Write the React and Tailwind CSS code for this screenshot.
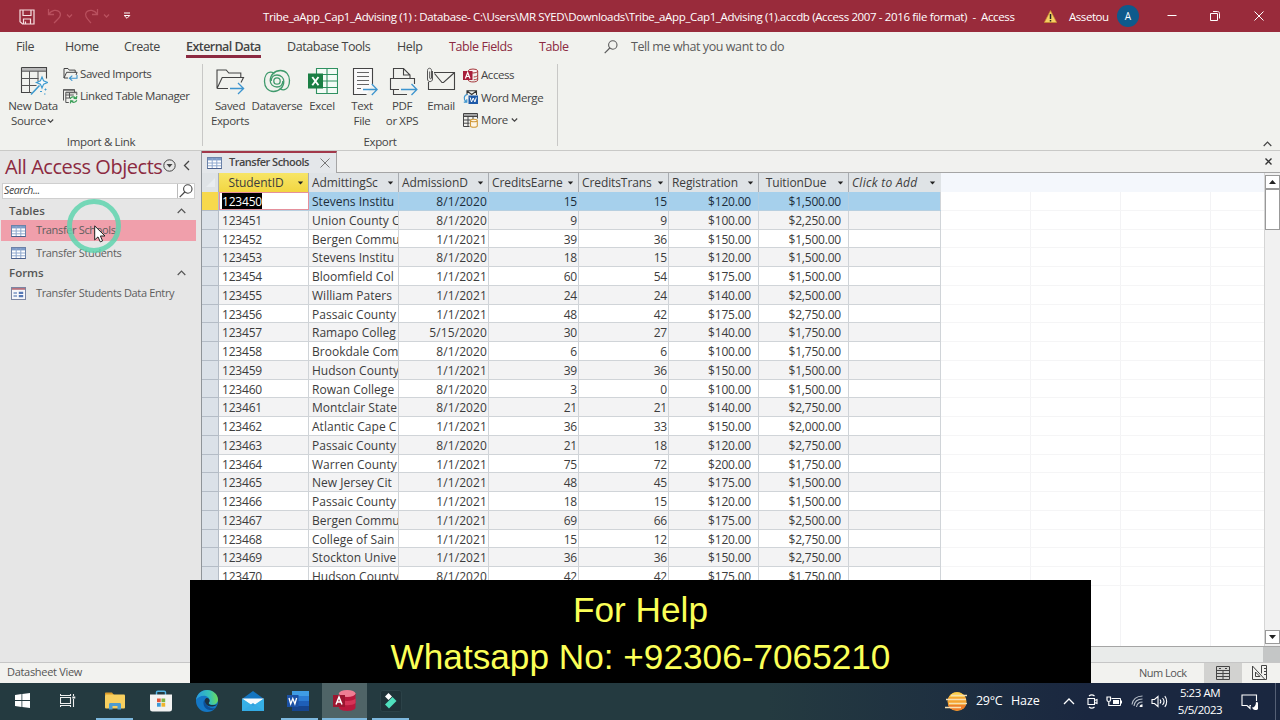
import clsx from 'clsx';

const rows = [
  ['123450', 'Stevens Institu', '8/1/2020', '15', '15', '$120.00', '$1,500.00'],
  ['123451', 'Union County C', '8/1/2020', '9', '9', '$100.00', '$2,250.00'],
  ['123452', 'Bergen Commu', '1/1/2021', '39', '36', '$150.00', '$1,500.00'],
  ['123453', 'Stevens Institu', '8/1/2020', '18', '15', '$120.00', '$1,500.00'],
  ['123454', 'Bloomfield Col', '1/1/2021', '60', '54', '$175.00', '$1,500.00'],
  ['123455', 'William Paters', '1/1/2021', '24', '24', '$140.00', '$2,500.00'],
  ['123456', 'Passaic County', '1/1/2021', '48', '42', '$175.00', '$2,750.00'],
  ['123457', 'Ramapo Colleg', '5/15/2020', '30', '27', '$140.00', '$1,750.00'],
  ['123458', 'Brookdale Com', '8/1/2020', '6', '6', '$100.00', '$1,750.00'],
  ['123459', 'Hudson County', '1/1/2021', '39', '36', '$150.00', '$1,500.00'],
  ['123460', 'Rowan College', '8/1/2020', '3', '0', '$100.00', '$1,500.00'],
  ['123461', 'Montclair State', '8/1/2020', '21', '21', '$140.00', '$2,750.00'],
  ['123462', 'Atlantic Cape C', '1/1/2021', '36', '33', '$150.00', '$2,000.00'],
  ['123463', 'Passaic County', '8/1/2020', '21', '18', '$120.00', '$2,750.00'],
  ['123464', 'Warren County', '1/1/2021', '75', '72', '$200.00', '$1,750.00'],
  ['123465', 'New Jersey Cit', '1/1/2021', '48', '45', '$175.00', '$1,500.00'],
  ['123466', 'Passaic County', '1/1/2021', '18', '15', '$120.00', '$1,500.00'],
  ['123467', 'Bergen Commu', '1/1/2021', '69', '66', '$175.00', '$2,500.00'],
  ['123468', 'College of Sain', '1/1/2021', '15', '12', '$120.00', '$2,750.00'],
  ['123469', 'Stockton Unive', '1/1/2021', '36', '36', '$150.00', '$2,750.00'],
  ['123470', 'Hudson County', '8/1/2020', '42', '42', '$175.00', '$1,750.00'],
];

const columns = ['StudentID', 'AdmittingSc', 'AdmissionD', 'CreditsEarne', 'CreditsTrans', 'Registration', 'TuitionDue'];

const tabs = [
  { label: 'File', width: 'w-[49px]' },
  { label: 'Home', width: 'w-[59px]' },
  { label: 'Create', width: 'w-[62px]' },
  { label: 'External Data', width: 'w-[101px]', active: true },
  { label: 'Database Tools', width: 'w-[110px]' },
  { label: 'Help', width: 'w-[52px]' },
  { label: 'Table Fields', width: 'w-[90px]', context: true },
  { label: 'Table', width: 'w-[65px]', context: true },
];

function Svg({ w, h, children, className }) {
  return (
    <svg width={w} height={h} viewBox={`0 0 ${w} ${h}`} fill="none" className={clsx('shrink-0', className)}>
      {children}
    </svg>
  );
}

function Chevron({ up, className }) {
  return (
    <Svg w={9} h={6} className={className}>
      <path d={up ? 'M.7 5 4.5 1.2 8.3 5' : 'M1.8 1.5 4.5 4.2 7.2 1.5'} stroke="currentColor" strokeWidth="1.2" />
    </Svg>
  );
}

function Magnifier() {
  return (
    <Svg w={14} h={14}>
      <circle cx="8.8" cy="5" r="4.2" stroke="currentColor" strokeWidth="1.1" />
      <path d="M5.8 8 .7 13.2" stroke="currentColor" strokeWidth="1.2" />
    </Svg>
  );
}

function TableIcon() {
  return (
    <Svg w={15} h={12}>
      <rect x=".5" y=".5" width="14" height="11" fill="#fff" stroke="#6b82a8" />
      <path d="M1 1h13v2.4H1z" fill="#7d9cc8" />
      <path d="M1 6h13M1 8.8h13M5.2 1v10M9.8 1v10" stroke="#8fa8ce" />
      <path d="M.5 11.5h14" stroke="#4a608c" />
    </Svg>
  );
}

function FormIcon() {
  return (
    <Svg w={15} h={13}>
      <rect x=".5" y=".5" width="14" height="12" fill="#f7f7fb" stroke="#7b86a3" />
      <path d="M1 1h13v1.8H1z" fill="#b8727e" />
      <path d="M2.5 6h3.5M2.5 9h3.5" stroke="#3f66a8" strokeWidth="1.1" />
      <path d="M7.8 4.8h4.4v2.2H7.8zM7.8 8h4.4v2.2H7.8z" fill="#5577b5" />
    </Svg>
  );
}

function NewDataIcon() {
  return (
    <Svg w={28} h={30} className="ml-0.5">
      <path d="M1.5 1.5h25v11M1.5 1.5v25h10" stroke="#444" strokeWidth="1.1" />
      <path d="M2 2h24v3.2H2z" fill="#b9b9b9" />
      <path d="M1.5 5.2h25M1.5 12.5h17M1.5 19.5h15M9.5 5.2v21.3M18 5.2v10" stroke="#555" />
      <path d="m11 28.5 8.5-9" stroke="#3d9bd0" strokeWidth="1.6" />
      <path d="m22 11 1.600 3.900 3.900 1.600-3.900 1.600-1.600 3.900-1.600-3.900-3.900-1.600 3.900-1.600z" fill="#f4fafd" stroke="#3d9bd0" strokeWidth="1.200" />
      <path d="M25.500 22.500v2M24.500 23.500h2M20 25.500h2M24 28h1.500" stroke="#3d9bd0" />
    </Svg>
  );
}

function SavedImportsIcon() {
  return (
    <Svg w={15} h={14}>
      <path d="M1 11V1.500h4l1.200 1.600h6v2.200M1 11l2.600-5.700h10.500L13 8M1 11h4" stroke="#444" />
      <path d="M14 8v3.300H6.500M9.300 8.600 6.400 11.300l2.900 2.400" stroke="#3d95cf" strokeWidth="1.1" />
    </Svg>
  );
}

function LinkedTableIcon() {
  return (
    <Svg w={15} h={15}>
      <path d="M.5 11.500V.500h11v2.500M2.800 13.500V3.200h11V6M2.800 6h8M2.800 9h4M2.800 13.500h3M6.500 3v6" stroke="#555" />
      <path d="M.500 1h11M3 3.700h10.500" stroke="#666" strokeWidth="1.300" />
      <path d="M7.200 10c.6-2.200 3.800-3 5.400-.9M13.800 6.800l-.4 2.800-2.800-.2M13.800 11.300c-.8 2.200-4 2.800-5.400.8M7.400 14.400l.4-2.700 2.600.3" stroke="#3a9f57" strokeWidth="1.200" />
    </Svg>
  );
}

function SavedExportsIcon() {
  return (
    <Svg w={30} h={27}>
      <path d="M2 20.500V2h9.200l2.600 3h12v4.500M2 20.500l5.200-11h21.300l-2.500 5M2 20.500h11" stroke="#444" strokeWidth="1.100" />
      <path d="M15 20.500h13.500M23 15l5.600 5.500L23 26" stroke="#3d95cf" strokeWidth="1.300" />
    </Svg>
  );
}

function DataverseIcon() {
  return (
    <Svg w={28} h={24}>
      <g stroke="#3f9a6c" strokeWidth="1.300">
        <path d="M19.800 12c0 3.800-2.700 6-5.800 6-4 0-6.800-2.900-6.800-6.500C7.200 6 11.500 1.500 17.500 1.500c5.500 0 9 4.300 9 10 0 5-2 9.300-6.300 9.300-2 0-3-.8-3-2" />
        <path d="M8.200 12c0-3.800 2.700-6 5.800-6 4 0 6.800 2.900 6.800 6.500 0 5.500-4.300 10-10.300 10-5.500 0-9-4.300-9-10 0-5 2-9.300 6.300-9.300 2 0 3 .8 3 2" />
        <circle cx="14" cy="12" r="3.200" />
      </g>
    </Svg>
  );
}

function ExcelIcon() {
  return (
    <Svg w={30} h={28} className="ml-0.5">
      <path d="M8.500 1.500h21v25h-21zM8.500 7.500h21M8.500 14h21M8.500 20.500h21M19 1.500v25" stroke="#2f9160" strokeWidth="1.100" fill="#f4fbf6" />
      <rect y="6.500" width="15" height="15" fill="#1b7f44" />
      <path d="m4.300 10 6.200 8.300M10.500 10l-6.200 8.300" stroke="#fff" strokeWidth="1.900" />
    </Svg>
  );
}

function TextFileIcon() {
  return (
    <Svg w={26} h={29} className="ml-[5px]">
      <path d="M20.500 17V1.500h-19v26h13" stroke="#444" strokeWidth="1.100" fill="#fafafa" />
      <path d="M5 5.500h12M5 9.500h12M5 13.500h12M5 17.500h12M5 21.500h4" stroke="#666" />
      <path d="M11 22.500h14M19.800 17l5.400 5.500-5.400 5.500" stroke="#3d95cf" strokeWidth="1.300" />
    </Svg>
  );
}

function PdfIcon() {
  return (
    <Svg w={29} h={29} className="ml-[2px]">
      <path d="M4.500 11.500v-10h10l6.500 6.500v3.500M14.500 1.500v6.500h6.500" stroke="#444" strokeWidth="1.100" />
      <path d="M4.500 22.500h-3v-11h24v5.500M10 22.500H4.500v5h13.500" stroke="#444" strokeWidth="1.100" />
      <path d="M12 22.500h16M22.500 17l5.400 5.500-5.400 5.500" stroke="#3d95cf" strokeWidth="1.300" />
    </Svg>
  );
}

function EmailIcon() {
  return (
    <Svg w={30} h={28}>
      <path d="M8 5.500h20.500v17h-26V15" stroke="#444" strokeWidth="1.100" />
      <path d="m8.500 6.500 7.500 9h1.500L28 6" stroke="#444" strokeWidth="1.100" />
      <path d="M6.500 4v8c0 3.500-5 3.500-5 0V3.500c0-3 4-3 4 0V11c0 1-1.800 1-1.800 0V4.500" stroke="#555" />
    </Svg>
  );
}

function AccessSmallIcon() {
  return (
    <Svg w={16} h={15}>
      <ellipse cx="10" cy="3" rx="4.700" ry="2" fill="#fbeef0" stroke="#a4373a" />
      <path d="M14.700 3v9c0 2.600-9.400 2.600-9.400 0M14.700 7c0 1-1.500 1.800-4 2M14.700 10c0 1-1.500 1.600-4 1.800" stroke="#a4373a" />
      <path d="M0 3h9.500v9H0z" fill="#a81f3b" />
      <path d="m2.400 10.500 2.300-6 2.300 6M3.200 8.500h3" stroke="#fff" strokeWidth="1.200" />
    </Svg>
  );
}

function WordMergeIcon() {
  return (
    <Svg w={16} h={15}>
      <path d="M4 5V.700h9.500V5M4 1l4.700 3.500L13.500 1" stroke="#333" strokeWidth="1.100" />
      <path d="M5.500 5.500h9.500v8.500H5.500z" fill="#1e5aa8" />
      <path d="m7.200 7.500 1.300 4.500 1.700-4 1.700 4 1.400-4.500" stroke="#fff" />
      <path d="M4.500 4.500C.8 5 .2 9.500 3 11.500M.8 12.200h3V9.300" stroke="#3d95cf" strokeWidth="1.200" />
    </Svg>
  );
}

function MoreIcon() {
  return (
    <Svg w={16} h={15}>
      <path d="M.500.500h14v5M.500.500v13h6M.500 3.500h14M.500 7h7M.500 10.200h6M5 3.500v10M10 3.500V6" stroke="#444" />
      <path d="M1 1.200h13v1.800H1z" fill="#999" />
      <path d="M7.500 7.500v5.500c0 1.700 6.800 1.700 6.800 0V7.500c0-1.700-6.800-1.700-6.800 0zc0 1.600 6.800 1.600 6.800 0" stroke="#d19a3b" strokeWidth="1.100" fill="#fdf5e6" />
    </Svg>
  );
}

function BigButton({ icon, lines, width, arrow }) {
  return (
    <div className={clsx('flex flex-col items-center', width)}>
      <div className="flex h-[34px] items-center">{icon}</div>
      <div className="text-center text-[11.5px] leading-[15px] tracking-[-0.35px] whitespace-nowrap">
        {lines.map((line, i) => (
          <div key={line} className="flex items-center justify-center">
            {line}
            {arrow && i === lines.length - 1 && <Chevron />}
          </div>
        ))}
      </div>
    </div>
  );
}

function SmallButton({ icon, label, arrow }) {
  return (
    <div className="flex h-[22px] items-center gap-[2px] text-[11.5px] tracking-[-0.43px] whitespace-nowrap">
      {icon}
      <span>{label}</span>
      {arrow && <Chevron />}
    </div>
  );
}

function TitleBar() {
  return (
    <header className="flex h-8 items-center bg-[#992b3b] text-white">
      <div className="flex w-[263px] items-center pl-[19px]">
        <Svg w={16} h={16} className="mt-px">
          <path d="M1 1h14v14H3.500L1 12.700zM4 1v5.500h8V1M4.500 15v-5h7v5M6.500 12.500V15" stroke="#f7dfe2" strokeWidth="1.200" />
        </Svg>
        <Svg w={27} h={16} className="ml-3 text-[#b9505e]">
          <path d="M1.500 1v5.500H7M1.800 6.200C4.500 2 10 1 12.600 4.200c2.500 3.300-.5 6-5.600 10.800" stroke="currentColor" strokeWidth="1.300" />
          <path d="m20 6.500 2.500 2.500L25 6.500" stroke="currentColor" strokeWidth="1.300" />
        </Svg>
        <Svg w={27} h={16} className="ml-2.5 text-[#b9505e]">
          <path d="M13.500 1v5.500H8M13.200 6.200C10.500 2 5 1 2.400 4.200-.1 7.500 3 10.500 7 15" stroke="currentColor" strokeWidth="1.300" />
          <path d="m20 6.500 2.500 2.500L25 6.500" stroke="currentColor" strokeWidth="1.300" />
        </Svg>
        <Svg w={8} h={8} className="ml-3">
          <path d="M1 1h6M1.200 3.500h5.600L4 6.300z" stroke="#fff" />
        </Svg>
      </div>
      <div className="w-[781px] pt-px text-[11.5px] tracking-[-0.36px] whitespace-pre">
        {'Tribe_aApp_Cap1_Advising (1) : Database- C:\\Users\\MR SYED\\Downloads\\Tribe_aApp_Cap1_Advising (1).accdb (Access 2007 - 2016 file format)  -  Access'}
      </div>
      <Svg w={13} h={13}>
        <path d="M6.500.500 12.700 12.500H.300z" fill="#f5cf63" stroke="#c98b2e" strokeWidth=".7" />
        <path d="M6.500 4v5M6.500 10v1.500" stroke="#222" strokeWidth="1.500" />
      </Svg>
      <div className="ml-3 w-[48px] pt-px text-[11.5px] tracking-[-0.450px]">Assetou</div>
      <div className="flex size-[22px] items-center justify-center rounded-full bg-[#0e5a8c] text-[10px]">A</div>
      <Svg w={10} h={10} className="ml-[28px]">
        <path d="M.500 4.500h9" stroke="#fff" />
      </Svg>
      <Svg w={10} h={10} className="ml-[33px]">
        <path d="M.500 2.500h7v7h-7zM3 .500h4.500c1.200 0 2 .8 2 2V7.500" stroke="#fff" />
      </Svg>
      <Svg w={10} h={10} className="ml-[34px]">
        <path d="m.500.500 9 9M9.500.500l-9 9" stroke="#fff" />
      </Svg>
    </header>
  );
}

function RibbonTabs() {
  return (
    <nav className="flex h-7 items-start pl-4 text-[12.5px] tracking-[-0.42px] whitespace-nowrap">
      {tabs.map((tab) => (
        <div key={tab.label} className={clsx('shrink-0', tab.width, tab.context && 'text-[#8c2a41]')}>
          <span
            className={clsx(
              'inline-block h-[26px] pt-[6px] leading-[18px]',
              tab.active && 'border-b-[3px] border-[#8c2a41] font-semibold tracking-[-0.55px]'
            )}
          >
            {tab.label}
          </span>
        </div>
      ))}
      <div className="flex items-center gap-[13px] pt-[6px] leading-[18px] text-[#5b5b5b]">
        <Magnifier />
        <span>Tell me what you want to do</span>
      </div>
    </nav>
  );
}

function Ribbon() {
  return (
    <section className="flex h-[91px] border-b border-[#c9c9c7] pt-1 text-[#444]">
      <div className="flex h-[86px] w-[202px] flex-col">
        <div className="flex h-[70px] pl-1">
          <BigButton icon={<NewDataIcon />} lines={['New Data', 'Source']} width="w-[58px]" arrow />
          <div className="-mt-px pl-px">
            <SmallButton icon={<SavedImportsIcon />} label="Saved Imports" />
            <SmallButton icon={<LinkedTableIcon />} label="Linked Table Manager" />
          </div>
        </div>
        <div className="pt-px text-center text-[11.5px] leading-[17px] tracking-[-0.35px]">Import &amp; Link</div>
      </div>
      <div className="h-[82px] w-px bg-[#c8c8c6]" />
      <div className="flex h-[86px] w-[354px] flex-col">
        <div className="flex h-[70px] pl-1">
          <BigButton icon={<SavedExportsIcon />} lines={['Saved', 'Exports']} width="w-[46px]" />
          <BigButton icon={<DataverseIcon />} lines={['Dataverse']} width="w-[48px]" />
          <BigButton icon={<ExcelIcon />} lines={['Excel']} width="w-[42px]" />
          <BigButton icon={<TextFileIcon />} lines={['Text', 'File']} width="w-[38px]" />
          <BigButton icon={<PdfIcon />} lines={['PDF', 'or XPS']} width="w-[42px]" />
          <BigButton icon={<EmailIcon />} lines={['Email']} width="w-[36px]" />
          <div className="flex flex-col gap-[0.5px] pl-[4px]">
            <SmallButton icon={<AccessSmallIcon />} label="Access" />
            <SmallButton icon={<WordMergeIcon />} label="Word Merge" />
            <SmallButton icon={<MoreIcon />} label="More" arrow />
          </div>
        </div>
        <div className="pt-px text-center text-[11.5px] leading-[17px] tracking-[-0.35px]">Export</div>
      </div>
      <div className="h-[82px] w-px bg-[#c8c8c6]" />
      <div className="flex flex-1 items-end justify-end pr-2 pb-[3px]">
        <Chevron up />
      </div>
    </section>
  );
}

function NavGroup({ label }) {
  return (
    <div className="flex h-[19px] items-center justify-between pr-[15px] pl-[9px] text-[11.5px] font-semibold text-[#555]">
      {label}
      <Chevron up />
    </div>
  );
}

function NavItem({ icon, label, selected }) {
  return (
    <div
      className={clsx(
        'ml-px flex h-[21px] w-[195px] items-center gap-[10px] pl-[10px] text-[11px] tracking-[-0.35px] whitespace-nowrap text-[#5e5e5e]',
        selected && 'bg-[#f09fab]'
      )}
    >
      {icon}
      {label}
    </div>
  );
}

function NavPane() {
  return (
    <aside className="flex w-[201px] shrink-0 flex-col bg-[#e6e6e6]">
      <div className="flex h-[32px] items-center pl-[5px] text-[#8c2a41]">
        <span className="w-[158px] text-[20px] tracking-[-0.45px] whitespace-nowrap">All Access Objects</span>
        <Svg w={13} h={13} className="-mt-1 text-[#444]">
          <circle cx="6.500" cy="6.500" r="5.700" stroke="currentColor" />
          <path d="M3.500 5h6l-3 3.500z" fill="currentColor" />
        </Svg>
        <Svg w={7} h={11} className="-mt-1 ml-[7px] text-[#444]">
          <path d="M6 1 1.500 5.500 6 10" stroke="currentColor" strokeWidth="1.300" />
        </Svg>
      </div>
      <div className="ml-0.5 flex h-[16px] w-[193px] border border-[#cfcfcf] bg-white">
        <div className="flex flex-1 items-center border-r border-[#bbb] pl-px text-[10.500px] tracking-[-0.400px] text-[#444] italic">Search...</div>
        <div className="flex w-[16px] items-center justify-center text-[#444]">
          <Magnifier />
        </div>
      </div>
      <div className="pt-[2px]">
        <NavGroup label="Tables" />
        <NavItem icon={<TableIcon />} label="Transfer Schools" selected />
        <div className="h-[1.5px]" />
        <NavItem icon={<TableIcon />} label="Transfer Students" />
        <NavGroup label="Forms" />
        <NavItem icon={<FormIcon />} label="Transfer Students Data Entry" />
      </div>
    </aside>
  );
}

function HeaderCell({ label, selected, centered }) {
  return (
    <div
      className={clsx(
        'flex h-full w-[90px] shrink-0 items-center border-r border-[#a9adb2] pr-[4px] pl-[3px]',
        selected && 'bg-gradient-to-b from-[#f7e566] to-[#f2d640]'
      )}
    >
      <span className={clsx('flex-1 whitespace-nowrap', centered && 'pr-[7px] text-center')}>{label}</span>
      <Svg w={7} h={4} className="mt-px text-[#222]">
        <path d="M.800.500h5.400L3.500 3.500z" fill="currentColor" />
      </Svg>
    </div>
  );
}

function DataRow({ row, index }) {
  const current = index === 0;
  const cell = clsx('h-full w-[90px] shrink-0 overflow-hidden border-r whitespace-nowrap', current ? 'border-[#b7cfe0]' : 'border-[#d0d4d8]');
  return (
    <div className="flex h-[18.75px] shrink-0 leading-[20px]">
      <div className={clsx('w-[17px] shrink-0 border-r border-b border-[#b4bcc6]', current ? 'bg-[#f7d94c]' : 'bg-[#dbe1e8]')} />
      <div
        className={clsx(
          'flex w-[722px] border-b',
          current ? 'border-[#b7cfe0] bg-[#a6d0ec] text-[#1d2d3a]' : 'border-[#d0d4d8]',
          !current && (index % 2 ? 'bg-[#f3f3f4]' : 'bg-white')
        )}
      >
        <div className={clsx(cell, current ? 'border border-[#e5909c] bg-white pl-[2px] leading-[17px]' : 'pl-[3px]')}>
          {current ? <span className="inline-block h-[17px] bg-black text-white">{row[0]}</span> : row[0]}
        </div>
        <div className={clsx(cell, 'pl-[3px] tracking-[0.02px]')}>{row[1]}</div>
        {row.slice(2).map((value, i) => (
          <div key={i} className={clsx(cell, 'text-right', i === 0 && 'tracking-[0.1px]', i > 2 ? 'pr-[7px]' : 'pr-px')}>
            {value}
          </div>
        ))}
        <div className="flex-1 border-r border-[#d0d4d8]" />
      </div>
      <div className="flex flex-1 border-b border-[#f5f5f6]">
        {[0, 1, 2].map((i) => (
          <div key={i} className="w-[90px] border-r border-[#f3f3f5]" />
        ))}
      </div>
    </div>
  );
}

function Datasheet() {
  return (
    <main className="flex min-w-0 flex-1 flex-col border-l border-[#8f9499] bg-[#f1f1ef]">
      <div className="flex h-[22px] border-b border-[#a5a5a5]">
        <div className="flex h-[22px] w-[135px] items-center border-t-2 border-r border-[#a2384a] border-r-[#a5a5a5] bg-[#e4e7ea] pb-px pl-[5px]">
          <TableIcon />
          <span className="ml-[7px] w-[91px] text-[11px] font-semibold tracking-[-0.5px] whitespace-nowrap text-[#444]">Transfer Schools</span>
          <Svg w={10} h={10} className="text-[#777]">
            <path d="m.500.500 9 9M9.500.500l-9 9" stroke="currentColor" />
          </Svg>
        </div>
        <div className="flex flex-1 items-center justify-end pr-[8px] text-[#333]">
          <Svg w={7} h={7}>
            <path d="m.500.500 6 6M6.500.500l-6 6" stroke="currentColor" strokeWidth="1.400" />
          </Svg>
        </div>
      </div>
      <div className="flex min-h-0 flex-1">
        <div className="flex min-w-0 flex-1 flex-col overflow-hidden bg-white text-[12px] tracking-[-0.2px] text-[#3c3c3c]">
          <div className="flex h-[19px] shrink-0 tracking-[-0.1px] bg-[#f4f7fc]">
            <div className="flex w-[17px] items-center justify-end border-r border-[#a9adb2] bg-[#dfe3e6] pr-[3px]">
              <Svg w={9} h={9}>
                <path d="M9 0v9H0z" fill="#e9edf0" />
              </Svg>
            </div>
            <div className="flex w-[722px] bg-[#dfe3e6]">
              {columns.map((label) => (
                <HeaderCell key={label} label={label} selected={label === 'StudentID'} centered={label === 'StudentID' || label === 'TuitionDue'} />
              ))}
              <div className="flex flex-1 items-center justify-between pr-[5px] pl-[3px] tracking-[0.3px] italic">
                Click to Add
                <Svg w={7} h={4} className="text-[#222]">
                  <path d="M.800.500h5.400L3.500 3.500z" fill="currentColor" />
                </Svg>
              </div>
            </div>
          </div>
          {rows.map((row, i) => (
            <DataRow key={row[0]} row={row} index={i} />
          ))}
          <div className="flex flex-1 pl-[739px]">
            {[0, 1, 2].map((i) => (
              <div key={i} className="w-[90px] border-r border-[#f3f3f5]" />
            ))}
          </div>
        </div>
        <div className="flex w-[16px] shrink-0 flex-col border-l border-[#d5d5d5] bg-[#f1f1f1]">
          <div className="mt-[2px] flex h-[14px] items-center justify-center border border-[#999] bg-white">
            <Svg w={7} h={4}>
              <path d="M0 4h7L3.500 0z" fill="#222" />
            </Svg>
          </div>
          <div className="h-[41px] border border-[#999] bg-white" />
          <div className="flex-1" />
          <div className="flex h-[14px] items-center justify-center border border-[#999] bg-white">
            <Svg w={7} h={4}>
              <path d="M0 0h7L3.500 4z" fill="#222" />
            </Svg>
          </div>
          <div className="h-[2px]" />
        </div>
      </div>
      <div className="flex h-4 border-t border-[#a5a5a5] bg-[#e9ebea]">
        <div className="flex-1" />
        <div className="w-[17px] bg-[#c4c6c6]" />
      </div>
    </main>
  );
}

function StatusBar() {
  return (
    <footer className="flex h-[21px] items-center border-t border-[#c6c6c6] bg-[#f2f2ef] pl-[7px] text-[11px] tracking-[-0.3px] text-[#555]">
      <span className="flex-1 pb-px">Datasheet View</span>
      <span className="w-[65px] tracking-[-0.5px]">Num Lock</span>
      <div className="flex h-full w-[38px] items-center justify-center bg-[#d2d2d0] pb-px">
        <Svg w={14} h={14}>
          <path d="M.500.500h13v13H.500zM.500 4.500h13M.500 7.500h13M.500 10.500h13M7 4.500v9" stroke="#444" />
          <path d="M3 2.500h2M9 2.500h2" stroke="#444" />
        </Svg>
      </div>
      <div className="flex w-[38px] items-center justify-center pr-1 pb-px">
        <Svg w={15} h={15}>
          <path d="M.500 1v13.500h12.500zM3.500 7v4.500H8zM9.500 8.500V.500h5v14h-2M12 3.500h2.500M12 6.500h2.500M12 9.500h2.500" stroke="#444" />
        </Svg>
      </div>
    </footer>
  );
}

function TaskItem({ children, width, underline, active }) {
  return (
    <div className={clsx('flex h-full shrink-0 flex-col items-center', width, active && 'bg-[#4f6467]')}>
      <div className="flex flex-1 items-center">{children}</div>
      <div className={clsx('h-[2px]', active ? 'w-full' : 'w-[37px]', underline && 'bg-[#7db8de]')} />
    </div>
  );
}

function Taskbar() {
  return (
    <div className="flex h-[37px] bg-gradient-to-r from-[#243a40] from-60% to-[#1a2740] to-85% text-white">
      <TaskItem width="w-[45px]">
        <Svg w={15} h={15}>
          <path d="M0 2 6.500 1v6H0zM7.300.900 15 0v7H7.300zM0 8h6.500v6L0 13zM7.300 8H15v7l-7.700-1z" fill="#fff" />
        </Svg>
      </TaskItem>
      <TaskItem width="w-[46px]">
        <Svg w={16} h={15}>
          <path d="M.500 1v1.500h10V1M.500 4.500h10v6H.500zM.500 14v-1.500h10V14M13.500 1v2M13.500 6v8" stroke="#eee" strokeWidth="1.100" />
          <path d="M12.300 3.500h3v2h-3z" fill="#eee" />
        </Svg>
      </TaskItem>
      <TaskItem width="w-[47px]" underline>
        <Svg w={20} h={18}>
          <path d="M0 1.500C0 .700.500.500 1 .500h6L9 3H0z" fill="#dc9c2a" />
          <rect y="2.500" width="20" height="14" rx="1" fill="#f7cf5f" />
          <path d="M4 17.500v-5c0-1 .5-1.500 1.500-1.500h9c1 0 1.500.5 1.500 1.500v5h-3.500V14h-5v3.500z" fill="#4c9bd0" />
        </Svg>
      </TaskItem>
      <TaskItem width="w-[45px]">
        <Svg w={22} h={22}>
          <path d="M6.500 5V2.500c0-.8.500-1.300 1.300-1.300h6.400c.8 0 1.300.5 1.300 1.300V5" stroke="#53b3e4" strokeWidth="1.400" />
          <path d="M0 4.500h22V19c0 1.700-1 2.500-2.500 2.500h-17C1 21.500 0 20.700 0 19z" fill="#f2f2f2" />
          <path d="M7 8.500h3.700v3.700H7z" fill="#e2543a" />
          <path d="M11.500 8.500h3.700v3.700h-3.700z" fill="#7cb342" />
          <path d="M7 13h3.700v3.700H7z" fill="#3a9ad9" />
          <path d="M11.500 13h3.700v3.700h-3.700z" fill="#efb52e" />
        </Svg>
      </TaskItem>
      <TaskItem width="w-[47px]">
        <Svg w={22} h={22}>
          <defs>
            <linearGradient id="edge" x1="2" y1="10" x2="22" y2="8" gradientUnits="userSpaceOnUse">
              <stop stopColor="#2a9fdc" />
              <stop offset=".6" stopColor="#37c3b5" />
              <stop offset="1" stopColor="#6fdc57" />
            </linearGradient>
          </defs>
          <circle cx="11" cy="11" r="11" fill="#1477c5" />
          <path d="M0 10C.800 4.300 5.500 0 11 0c6.200 0 11 4.500 11 9.500 0 3.300-2.500 5.300-5.500 5.300-2.700 0-4-1-3.800-1.800.3-.6.900-1.100.9-2.500C13.600 8 11 5.800 8 5.800 4.500 5.800 1.500 7.500 0 10z" fill="url(#edge)" />
          <path d="M8.500 9.500c-2.500 3.500-.5 9.500 5 10.500 2.500.4 5-.5 6.500-2C17 19 9.500 18 8.500 9.500z" fill="#0c4f97" />
          <path d="M12.700 13c.3-.6.900-1.100.9-2.500 0-1.500-1.200-2.500-2.600-2.500-2 0-2.600 2.500-1.800 4.500 1.200 3.300 5 5 9.300 3.500 2-.7 2.500-1.500 2.500-1.500-5 1.200-8.500.3-8.300-1.500z" fill="#1d3140" />
        </Svg>
      </TaskItem>
      <TaskItem width="w-[46px]">
        <Svg w={22} h={20}>
          <path d="M0 8 11 0l11 8v3H0z" fill="#1475c0" />
          <path d="M0 8h22v12H0z" fill="#3fb7ea" />
          <path d="M0 7.500h22L11 15z" fill="#f4fafd" />
          <path d="m0 20 11-8 11 8z" fill="#2d9fdd" />
          <path d="M0 7.500 11 15l11-7.500V20H0z" fill="#35aee6" opacity=".8" />
        </Svg>
      </TaskItem>
      <TaskItem width="w-[46px]" underline>
        <Svg w={22} h={20} className="-ml-0.5">
          <path d="M5 0h17v5H5z" fill="#3f9ce4" />
          <path d="M5 5h17v5H5z" fill="#2b7cd3" />
          <path d="M5 10h17v5H5z" fill="#1e5fb8" />
          <path d="M5 15h17v5H5z" fill="#16458e" />
          <path d="M0 4h11.500v12H0z" fill="#1b51a5" />
          <path d="m2 7 1.700 6 2.100-5.500L7.900 13l1.700-6" stroke="#fff" strokeWidth="1.300" />
        </Svg>
      </TaskItem>
      <TaskItem width="w-[45px]" underline active>
        <Svg w={23} h={21}>
          <path d="M6 3v14.500C6 22 22.500 22 22.500 17.500V3z" fill="#b8183c" />
          <path d="M6 8.500C8 11.500 20 12 22.500 8.500V13C20 16 8 16 6 13z" fill="#d53457" />
          <ellipse cx="14.200" cy="3.500" rx="8.300" ry="3.500" fill="#ef7d93" />
          <path d="M0 5h12v12H0z" fill="#9c1630" />
          <path d="m3 14.500 3-7.500 3 7.500M4 12h4" stroke="#fff" strokeWidth="1.500" />
        </Svg>
      </TaskItem>
      <TaskItem width="w-[47px]" underline>
        <Svg w={22} h={22}>
          <rect x=".500" y=".500" width="21" height="21" rx="2" fill="#1f3238" stroke="#2c4248" />
          <path d="M5 6.500 8.500 3l3.500 3.500L8.500 10z" fill="#fff" />
          <path d="m5 14.500 7.500-7.500 4 4-7.500 7.500z" fill="#4fe0bd" />
        </Svg>
      </TaskItem>
      <div className="flex flex-1 items-center justify-end text-[12.5px]">
        <Svg w={24} h={21}>
          <circle cx="12" cy="10.500" r="9.500" fill="#f4a531" />
          <path d="M4 6C7-.300 17-.300 20 6z" fill="#f8cf4c" />
          <path d="M3 14c2 7 15.500 7.500 18 0z" fill="#ee7f2a" />
          <path d="M6 4.500h16M1 8.500h20M4 12.500h18M0 16.500h16" stroke="#f6dfb0" strokeWidth="1.300" />
        </Svg>
        <span className="ml-[7px] w-[35px] tracking-[-0.3px]">29°C</span>
        <span className="w-[52px] tracking-[-0.1px]">Haze</span>
        <Svg w={12} h={7}>
          <path d="m1 6 5-5 5 5" stroke="#fff" strokeWidth="1.300" />
        </Svg>
        <Svg w={11} h={15} className="ml-3">
          <path d="M1 4.500h6.500v6H1zM7.500 6.500 10 5.500v4l-2.500-1M2 2c1.500-1.300 4-1.300 5.500 0M2 13c1.500 1.300 4 1.300 5.500 0" stroke="#fff" strokeWidth="1.100" />
        </Svg>
        <Svg w={16} h={11} className="ml-2">
          <path d="M5.500 2.500h9v7H4.500M15.500 4.500v3" stroke="#fff" />
          <path d="M7 4h6v4H7z" fill="#fff" />
          <path d="M1 1v3c0 2 3.500 2 3.500 0V1zM2.800 5v4.500H6" stroke="#fff" strokeWidth="1.200" />
        </Svg>
        <Svg w={13} h={13} className="ml-[9px]">
          <path d="M1 9.500C1.500 4.500 5.500 1 11.500 1M3 11c.5-4 3.500-7 8.500-7M5.500 12c.5-3 2.500-5 6-5" stroke="#b9c0ca" strokeWidth="1.100" />
          <path d="M8.500 12c0-1.500 1.300-2.700 3-2.700V12z" fill="#fff" />
        </Svg>
        <Svg w={17} h={13} className="ml-[7px]">
          <path d="M1 4.500h2.500L7 1.500v10L3.500 8.500H1zM9 4.500c1 1.200 1 2.800 0 4M11.500 3c1.800 2 1.800 5 0 7M13.800 1.200c2.500 3 2.500 7.600 0 10.600" stroke="#fff" strokeWidth="1.100" />
        </Svg>
        <div className="ml-[9px] w-[46px] pb-[2px] text-center text-[11.5px] leading-[17px] tracking-[-0.450px] whitespace-nowrap">
          <div>5:23 AM</div>
          <div>5/5/2023</div>
        </div>
        <Svg w={17} h={16} className="ml-[18px]">
          <path d="M6 11.500H1V1h14.500v6M6 11.500l3 3v-3h1" stroke="#fff" strokeWidth="1.100" />
          <path d="M15 8a4 4 0 1 1-4 5.500C13.500 13.500 15 11.500 15 8z" fill="#fff" />
        </Svg>
        <div className="ml-[17px] h-full w-px bg-[#556075]" />
        <div className="w-1" />
      </div>
    </div>
  );
}

export default function App() {
  return (
    <div className="relative flex h-[720px] w-[1280px] flex-col overflow-hidden bg-[#f1f2ee] font-['Open_Sans','Noto_Sans',sans-serif] text-[#444]">
      <TitleBar />
      <RibbonTabs />
      <Ribbon />
      <div className="flex min-h-0 flex-1">
        <NavPane />
        <Datasheet />
      </div>
      <StatusBar />
      <Taskbar />

      {/* pointer with click highlight */}
      <div className="absolute top-[199px] left-[67px] size-[54px] rounded-full border-[5px] border-[#5fd3ae]/85" />
      <Svg w={12} h={18} className="absolute top-[225px] left-[94px]">
        <path d="M.700.900v14l3.300-3 2.300 5 2.300-1-2.200-4.900H11z" fill="#fff" stroke="#222" />
      </Svg>

      <div className="absolute top-[580px] left-[190px] h-[103px] w-[901px] bg-black pt-[6px] text-center font-['Liberation_Sans',Arial,sans-serif] text-[35.2px] leading-[47px] text-[#fbff57]">
        <p>For Help</p>
        <p>Whatsapp No: +92306-7065210</p>
      </div>
    </div>
  );
}
